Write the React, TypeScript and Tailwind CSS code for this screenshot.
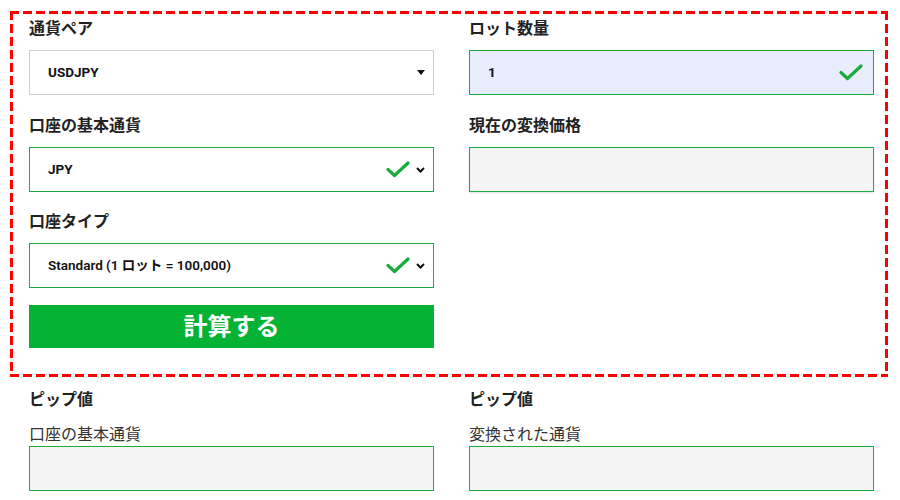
import React from "react";

const font = { fontFamily: '"Noto Sans CJK JP", "Noto Sans", sans-serif' };
const inputFont = { fontFamily: 'Roboto, "Noto Sans CJK JP", sans-serif' };

function Check() {
  return (
    <svg width="24" height="17" viewBox="0 0 24 17" className="shrink-0">
      <polyline points="2,8.5 8.5,14.5 22,2" fill="none" stroke="#1aab3c" strokeWidth="3.2" strokeLinecap="round" strokeLinejoin="round" />
    </svg>
  );
}

function Chevron() {
  return (
    <svg width="9" height="6" viewBox="0 0 9 6" className="shrink-0">
      <polyline points="1,1 4.5,4.5 8,1" fill="none" stroke="#111" strokeWidth="2" />
    </svg>
  );
}

function Triangle() {
  return (
    <svg width="8" height="5" viewBox="0 0 8 5" className="shrink-0">
      <polygon points="0,0 8,0 4,5" fill="#111" />
    </svg>
  );
}

function Label({ children }: { children: React.ReactNode }) {
  return (
    <div className="h-[20px] leading-[20px] text-[16px] font-bold text-[#222] mb-[13px]" style={font}>
      {children}
    </div>
  );
}

export default function App() {
  return (
    <div className="w-[900px] h-[500px] bg-white pt-[11px] pl-[10px] overflow-hidden" style={font}>
      <div className="w-[878px] h-[366px] pt-[6px] pl-[19px] flex gap-[35px] [background:repeating-linear-gradient(90deg,#ff0000_0_9px,transparent_9px_13px)_left_top/100%_3px_no-repeat,repeating-linear-gradient(90deg,#ff0000_0_9px,transparent_9px_13px)_left_bottom/100%_3px_no-repeat,repeating-linear-gradient(180deg,#ff0000_0_9px,transparent_9px_13px)_left_top/3px_100%_no-repeat,repeating-linear-gradient(180deg,#ff0000_0_9px,transparent_9px_13px)_right_top/3px_100%_no-repeat]">
        {/* left column */}
        <div className="w-[405px] flex flex-col">
          <Label>通貨ペア</Label>
          <div className="h-[45px] border border-solid border-[#cfcfcf] bg-white flex items-center pl-[18px] pr-[8px]">
            <span className="flex-1 text-[13.5px] font-bold text-[#111]" style={inputFont}>USDJPY</span>
            <Triangle />
          </div>

          <div className="mt-[19px]">
            <Label>口座の基本通貨</Label>
          </div>
          <div className="h-[45px] border border-solid border-[#1aab3c] bg-white flex items-center pl-[18px] pr-[8px]">
            <span className="flex-1 text-[13.5px] font-bold text-[#111]" style={inputFont}>JPY</span>
            <Check />
            <span className="w-[6px]" />
            <Chevron />
          </div>

          <div className="mt-[18px]">
            <Label>口座タイプ</Label>
          </div>
          <div className="h-[45px] border border-solid border-[#1aab3c] bg-white flex items-center pl-[18px] pr-[8px]">
            <span className="flex-1 text-[13.5px] font-semibold text-[#111]" style={inputFont}>Standard (1 ロット = 100,000)</span>
            <Check />
            <span className="w-[6px]" />
            <Chevron />
          </div>

          <button className="mt-[17px] h-[43px] pb-[4px] bg-[#04b234] text-white text-[24px] font-bold flex items-center justify-center" style={font}>
            計算する
          </button>
        </div>

        {/* right column */}
        <div className="w-[405px] flex flex-col">
          <Label>ロット数量</Label>
          <div className="h-[45px] border border-solid border-[#1aab3c] bg-[#e8edfd] flex items-center pl-[18px] pr-[10px]">
            <span className="flex-1 text-[13.5px] font-bold text-[#111]" style={inputFont}>1</span>
            <Check />
          </div>

          <div className="mt-[19px]">
            <Label>現在の変換価格</Label>
          </div>
          <div className="h-[45px] border border-solid border-[#1aab3c] bg-[#f4f4f4] shadow-[0_1px_2px_rgba(0,0,0,0.12)]" />
        </div>
      </div>

      {/* results */}
      <div className="pl-[19px] pt-[11px] flex gap-[35px]">
        <div className="w-[405px] flex flex-col">
          <div className="h-[20px] leading-[20px] text-[16px] font-bold text-[#222]">ピップ値</div>
          <div className="mt-[15px] h-[20px] leading-[20px] text-[16px] text-[#333]">口座の基本通貨</div>
          <div className="mt-[3px] h-[45px] border border-solid border-[#1aab3c] bg-[#f4f4f4]" />
        </div>
        <div className="w-[405px] flex flex-col">
          <div className="h-[20px] leading-[20px] text-[16px] font-bold text-[#222]">ピップ値</div>
          <div className="mt-[15px] h-[20px] leading-[20px] text-[16px] text-[#333]">変換された通貨</div>
          <div className="mt-[3px] h-[45px] border border-solid border-[#1aab3c] bg-[#f4f4f4]" />
        </div>
      </div>
    </div>
  );
}
